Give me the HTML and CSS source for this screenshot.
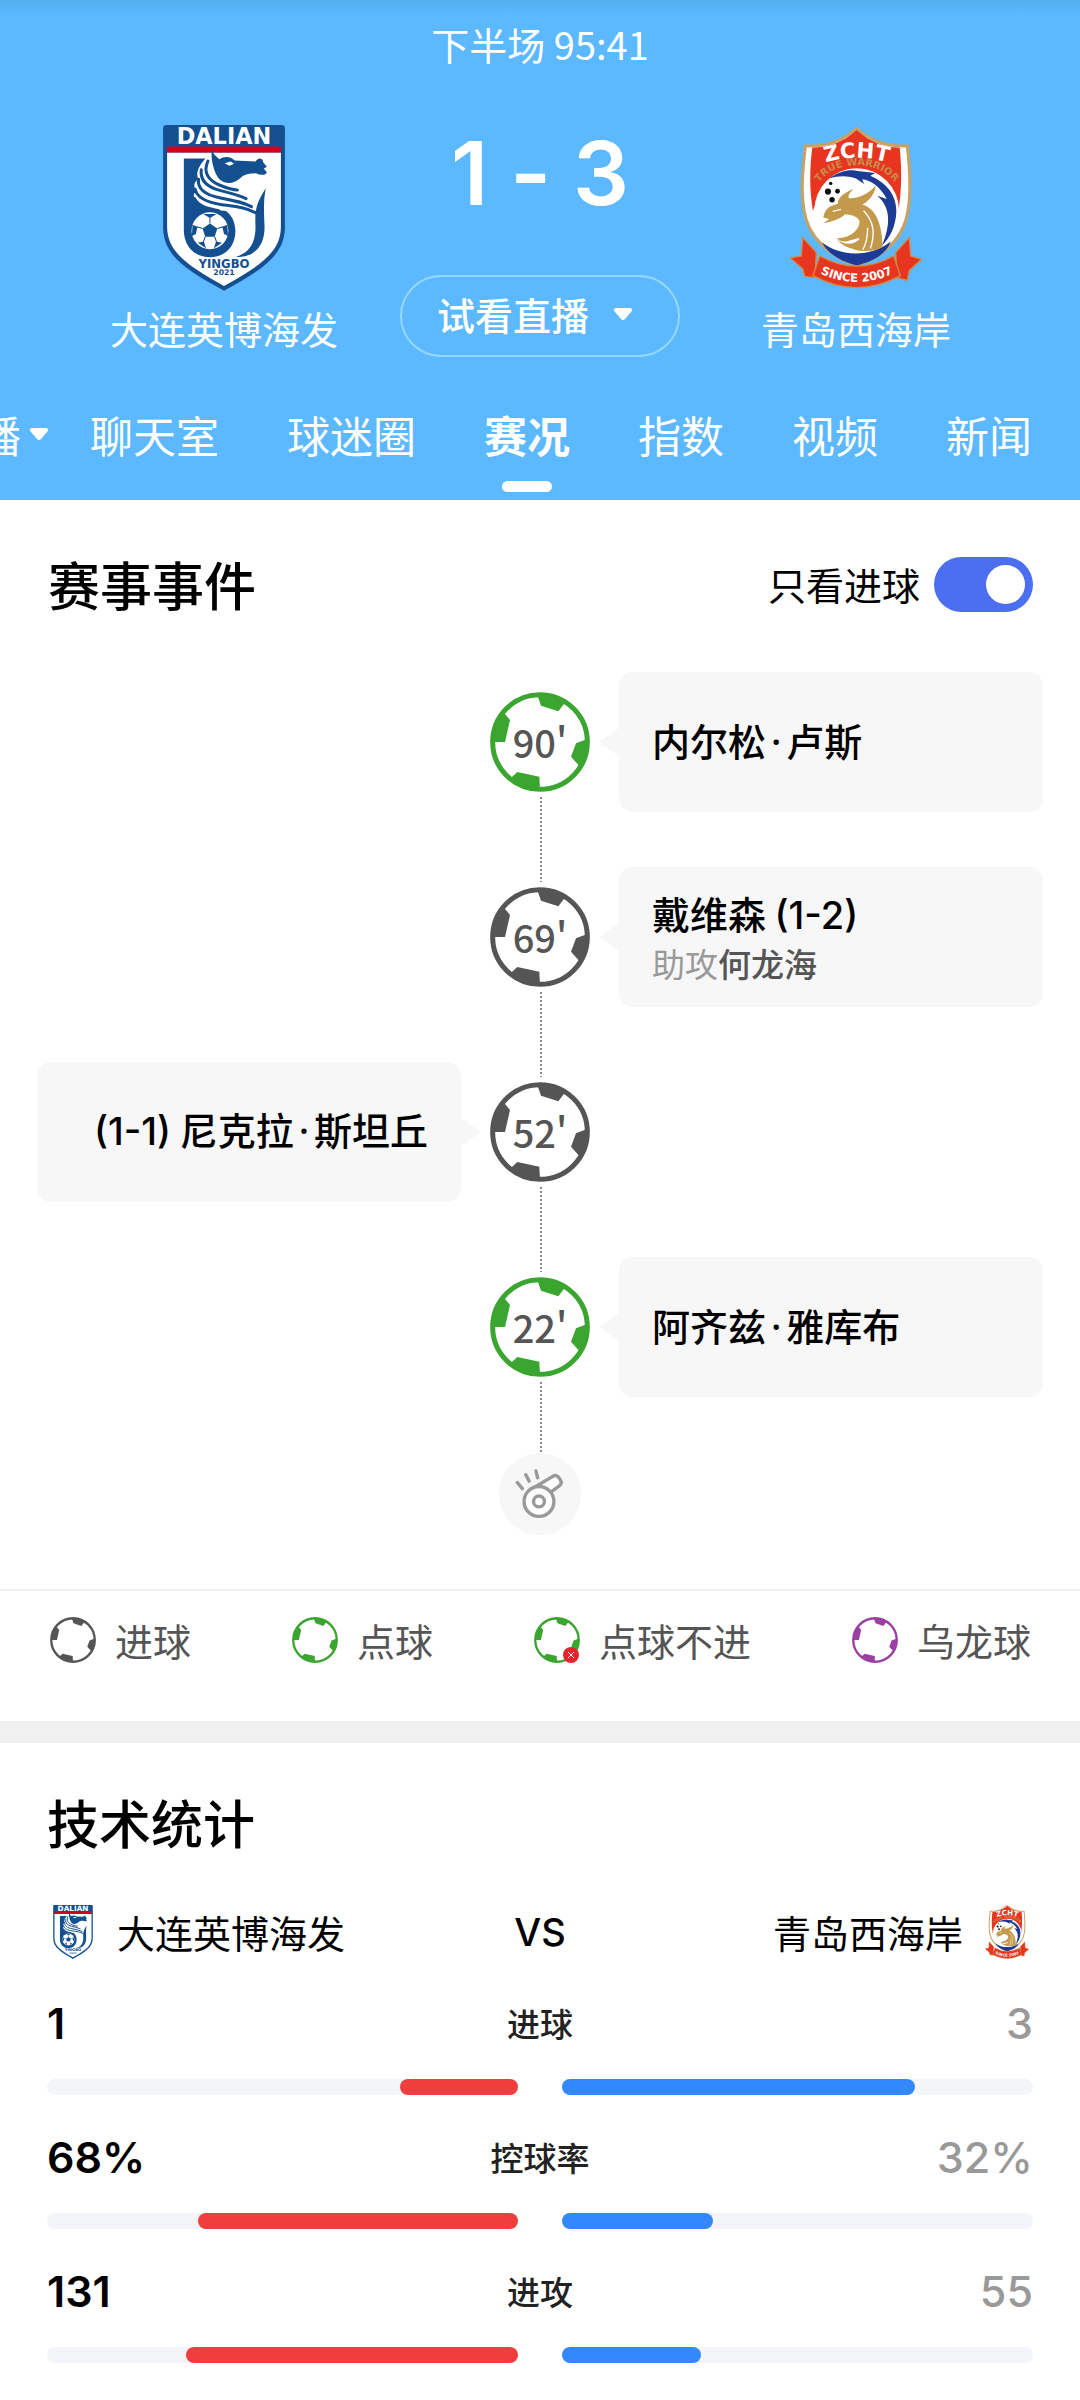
FILE: index.html
```html
<!DOCTYPE html>
<html lang="zh-CN">
<head>
<meta charset="utf-8">
<meta name="viewport" content="width=device-width, initial-scale=1">
<title>大连英博海发 1 - 3 青岛西海岸</title>
<link rel="stylesheet" href="styles.css">
</head>
<body>

<svg class="sprite" aria-hidden="true">
  <symbol id="ball" viewBox="60 64 300 300">
    <circle class="ball-ring" cx="210" cy="214" r="142"/>
    <path d="M203 76 L213 105 L265 122 L288 92 Q250 68 203 70Z M352 205 L318 218 L303 258 L330 288 Q358 250 355 205Z M120 324 L142 304 L208 318 L210 358 Q155 358 120 324Z M66 214 L105 214 L120 148 L102 126 Q66 165 66 214Z"/>
  </symbol>

  <symbol id="dalian" viewBox="38 46 368 496">
    <path fill="#14508f" d="M50 46H394Q404 46 404 56V350C404 436 336 478 222 541C106 478 40 436 40 350V56Q40 46 50 46Z"/>
    <path fill="#fff" d="M52 128H392V350C392 428 326 468 222 527C118 468 52 428 52 350Z"/>
    <path fill="#d0021f" d="M52 110H392V128H52Z"/>
    <text class="crest-text" x="222" y="103" font-size="67" fill="#fff">DALIAN</text>
    <path fill="#14508f" d="M102 146H178L166 180L150 285L222 300C275 325 270 441 180 441C130 441 102 405 102 360Z"/>
    <path fill="#fff" d="M172 140C148 165 135 190 146 208C132 215 128 232 142 244C128 250 128 262 142 272C150 290 175 290 200 300C240 306 280 300 322 316C330 280 345 240 350 200L280 170L200 150Z"/>
    <path fill="#14508f" d="M185 118C190 134 198 140 208 148C226 136 246 142 254 152L316 155C324 142 338 143 339 157L350 171L341 176L350 188C346 198 330 196 318 190C296 192 286 190 270 205C252 222 226 226 206 206C190 182 183 150 185 118Z"/>
    <path fill="#fff" d="M224 160L242 155L252 162L238 168Z"/>
    <g fill="none" stroke="#14508f" stroke-width="9" stroke-linecap="round">
      <path d="M174 154C158 188 176 212 210 226S254 240 262 240"/>
      <path d="M154 180C150 214 172 232 212 242S272 258 288 266"/>
      <path d="M146 208C142 238 170 256 212 264S278 276 304 290"/>
      <path d="M136 238C142 266 174 278 216 284S284 292 316 308"/>
      <path d="M134 266C146 290 174 296 206 302"/>
    </g>
    <path fill="#14508f" d="M347 235C318 280 314 300 316 345C318 402 294 430 256 440C306 444 346 412 343 345C341 300 340 268 347 235Z"/>
    <circle cx="180" cy="362" r="55" fill="#fff"/>
    <g fill="#14508f">
      <path d="M180 340L202 355L194 380H166L158 355Z"/>
      <path d="M160 312H200L180 324Z M128 344L143 350L138 372L126 378Z M232 344L217 350L222 372L234 378Z M144 398L162 394L168 414Z M216 398L198 394L192 414Z"/>
    </g>
    <path fill="none" stroke="#14508f" stroke-width="3" d="M180 340V322M202 355L219 350M194 380L200 396M166 380L160 396M158 355L141 350"/>
    <text class="crest-text" x="222" y="473" font-size="35" fill="#14508f">YINGBO</text>
    <text class="crest-text" x="222" y="495" font-size="23" fill="#14508f">2021</text>
  </symbol>

  <symbol id="qingdao" viewBox="35 25 386 474">
    <g fill="#e8351f" stroke="#d08a45" stroke-width="4">
      <path d="M72 348L112 392L108 466L78 462L72 440L36 408L68 402Z"/>
      <path d="M384 348L344 392L348 466L378 474L384 444L420 412L388 402Z"/>
    </g>
    <path fill="#fff" stroke="#c9a263" stroke-width="9" stroke-linejoin="round" d="M230 30C185 68 135 84 80 80C72 150 66 210 76 270C88 345 145 400 230 430C315 400 368 345 380 270C390 210 386 150 378 80C325 84 275 68 230 30Z"/>
    <path fill="#e8351f" d="M230 34C190 70 150 84 100 86C92 150 92 210 102 270L130 200L230 148L320 190L352 270C362 210 362 150 356 86C310 84 270 70 230 34Z"/>
    <circle cx="230" cy="270" r="124" fill="#fff"/>
    <path fill="#1d3a94" d="M128 362C180 404 270 408 330 360C316 396 280 418 230 430C182 418 146 396 128 362Z"/>
    <path fill="#1d3a94" d="M150 176C180 152 215 148 232 154L284 160L270 168C320 190 345 225 346 270C345 320 325 350 304 372C330 310 330 260 290 226L318 236C300 200 270 180 246 178L252 192L228 176C200 166 175 168 150 176Z"/>
    <path fill="#c39a4c" d="M132 290C138 262 150 256 174 250C178 226 196 218 220 206C206 222 204 228 208 234C240 232 262 222 286 196C282 226 262 244 246 252C282 262 304 300 306 376C286 390 250 390 222 384C240 370 244 362 236 350C204 358 190 368 172 350C196 352 240 334 238 300C232 284 210 282 196 280C184 292 160 302 134 306L150 294Z"/>
    <path fill="#c39a4c" d="M170 350C190 372 220 372 240 352L258 384C220 388 188 376 170 350Z"/>
    <path fill="none" stroke="#fff" stroke-width="4" d="M250 270C280 300 284 340 270 380M262 320C262 350 256 370 248 384M160 272L184 266"/>
    <g fill="#111"><circle cx="146" cy="214" r="9"/><circle cx="174" cy="213" r="7"/><circle cx="158" cy="238" r="8"/><circle cx="154" cy="190" r="5"/></g>
    <path id="zcht-arc" fill="none" d="M112 138Q230 92 348 138"/>
    <text class="crest-text" font-size="62" fill="#fff"><textPath href="#zcht-arc" startOffset="50%">ZCHT</textPath></text>
    <path id="warrior-arc" fill="none" d="M108 212C140 112 320 112 354 212"/>
    <text class="crest-text" font-size="29" fill="#c98a4a"><textPath href="#warrior-arc" startOffset="50%">TRUE WARRIOR</textPath></text>
    <path fill="#e8351f" stroke="#d08a45" stroke-width="4" d="M122 402Q230 462 338 402L358 460Q230 530 102 460Z"/>
    <path id="since-arc" fill="none" d="M112 448Q230 508 348 448"/>
    <text class="crest-text" font-size="34" fill="#fff"><textPath href="#since-arc" startOffset="50%">SINCE 2007</textPath></text>
  </symbol>
</svg>

<header class="hero">
  <p class="clock">下半场 95:41</p>
  <div class="matchup">
    <div class="team">
      <svg class="crest" role="img" aria-label="大连英博海发"><use href="#dalian"/></svg>
      <span class="team-name">大连英博海发</span>
    </div>
    <div class="center">
      <div class="score"><span>1</span><span>-</span><span>3</span></div>
      <button class="watch" type="button">试看直播
        <svg class="caret" viewBox="0 0 20 12" aria-hidden="true"><path d="M3 0H17Q21 1 18 4L12 11Q10 13 8 11L2 4Q-1 1 3 0Z"/></svg>
      </button>
    </div>
    <div class="team">
      <svg class="crest" role="img" aria-label="青岛西海岸"><use href="#qingdao"/></svg>
      <span class="team-name">青岛西海岸</span>
    </div>
  </div>
  <nav class="tabs">
    <a class="tab tab-menu" href="#live">直播<svg class="caret" viewBox="0 0 20 12" aria-hidden="true"><path d="M3 0H17Q21 1 18 4L12 11Q10 13 8 11L2 4Q-1 1 3 0Z"/></svg></a>
    <a class="tab" href="#chat">聊天室</a>
    <a class="tab" href="#fans">球迷圈</a>
    <a class="tab active" href="#events" aria-current="page">赛况</a>
    <a class="tab" href="#odds">指数</a>
    <a class="tab" href="#video">视频</a>
    <a class="tab" href="#news">新闻</a>
  </nav>
</header>

<main>
  <section class="events" id="events">
    <div class="section-head">
      <h2>赛事事件</h2>
      <label class="filter">只看进球<input class="switch" type="checkbox" checked></label>
    </div>

    <ol class="timeline">
      <li class="event away">
        <div class="minute penalty"><svg class="ball"><use href="#ball"/></svg><span>90'</span></div>
        <div class="card"><p class="player">内尔松<span class="dot">·</span>卢斯</p></div>
      </li>
      <li class="event away">
        <div class="minute goal"><svg class="ball"><use href="#ball"/></svg><span>69'</span></div>
        <div class="card"><p class="player">戴维森 <span class="tally">(1-2)</span></p><p class="assist">助攻<b>何龙海</b></p></div>
      </li>
      <li class="event home">
        <div class="minute goal"><svg class="ball"><use href="#ball"/></svg><span>52'</span></div>
        <div class="card"><p class="player"><span class="tally">(1-1)</span> 尼克拉<span class="dot">·</span>斯坦丘</p></div>
      </li>
      <li class="event away last">
        <div class="minute penalty"><svg class="ball"><use href="#ball"/></svg><span>22'</span></div>
        <div class="card"><p class="player">阿齐兹<span class="dot">·</span>雅库布</p></div>
      </li>
    </ol>

    <svg class="whistle" viewBox="149 581 242 242" role="img" aria-label="开场">
      <circle cx="270" cy="702" r="121" fill="#f7f7f7"/>
      <g fill="#fff" stroke="#999" stroke-width="10" stroke-linecap="round" stroke-linejoin="round">
        <path d="M240 690L308 650Q318 644 325 653L331 662Q336 670 328 677L305 694"/>
        <circle cx="267" cy="724" r="44"/>
        <circle cx="267" cy="724" r="16"/>
        <path d="M203 668L218 686M228 645L238 664M258 634L263 654"/>
      </g>
    </svg>

    <ul class="legend">
      <li class="goal"><svg class="ball"><use href="#ball"/></svg>进球</li>
      <li class="penalty"><svg class="ball"><use href="#ball"/></svg>点球</li>
      <li class="penalty missed"><svg class="ball"><use href="#ball"/></svg><svg class="miss" viewBox="0 0 16 16" aria-hidden="true"><circle cx="8" cy="8" r="8"/><path d="M5 5L11 11M11 5L5 11"/></svg>点球不进</li>
      <li class="own-goal"><svg class="ball"><use href="#ball"/></svg>乌龙球</li>
    </ul>
  </section>

  <section class="stats">
    <h2>技术统计</h2>
    <div class="versus">
      <div class="side"><svg class="mini-crest" aria-hidden="true"><use href="#dalian"/></svg>大连英博海发</div>
      <span class="vs">VS</span>
      <div class="side right">青岛西海岸<svg class="mini-crest" aria-hidden="true"><use href="#qingdao"/></svg></div>
    </div>

    <ul class="stat-list">
      <li class="stat">
        <div class="figures"><span class="value">1</span><span class="label">进球</span><span class="value lower">3</span></div>
        <div class="bars"><div class="track left"><div class="fill red" style="width:25%"></div></div><div class="track"><div class="fill blue" style="width:75%"></div></div></div>
      </li>
      <li class="stat">
        <div class="figures"><span class="value">68%</span><span class="label">控球率</span><span class="value lower">32%</span></div>
        <div class="bars"><div class="track left"><div class="fill red" style="width:68%"></div></div><div class="track"><div class="fill blue" style="width:32%"></div></div></div>
      </li>
      <li class="stat">
        <div class="figures"><span class="value">131</span><span class="label">进攻</span><span class="value lower">55</span></div>
        <div class="bars"><div class="track left"><div class="fill red" style="width:70.4%"></div></div><div class="track"><div class="fill blue" style="width:29.6%"></div></div></div>
      </li>
    </ul>
  </section>
</main>
</body>
</html>
```
FILE: styles.css
```css
* { box-sizing: border-box; }

body {
  margin: 0;
  background: #fff;
  color: #000;
  font-family: "Noto Sans CJK SC", "Noto Sans", sans-serif;
  font-size: 38px;
  line-height: 54px;
}

h2, p, ul, ol { margin: 0; padding: 0; list-style: none; }
h2 { font-size: 52px; line-height: 60px; font-weight: 500; }

.sprite { display: none; }
.crest-text { font-family: "DejaVu Sans", sans-serif; font-weight: 700; text-anchor: middle; }

/* Header */
.hero {
  padding-top: 17px;
  background: linear-gradient(#54aeef, #5cb9ff 14px);
  color: #fff;
}
.clock { text-align: center; }
.matchup {
  display: grid;
  grid-template-columns: 1fr 280px 1fr;
  min-height: 286px;
  padding: 54px 48px 0;
}
.team { display: flex; flex-direction: column; align-items: center; gap: 10px; }
.crest { width: 132px; height: 166px; }
.center { display: flex; flex-direction: column; justify-content: space-between; }
.score {
  display: flex;
  justify-content: center;
  gap: 22px;
  font-family: Inter, sans-serif;
  font-size: 88px;
  line-height: 96px;
  font-weight: 600;
}
.watch {
  display: flex;
  align-items: center;
  justify-content: center;
  gap: 24px;
  height: 82px;
  padding: 0 10px 4px 0;
  border: 2px solid #94d8ff;
  border-radius: 41px;
  background: none;
  color: inherit;
  font: inherit;
  font-weight: 500;
}
.caret { width: 20px; height: 12px; fill: #fff; }

.tabs {
  display: flex;
  justify-content: flex-end;
  gap: 68px;
  margin-top: 47px;
  padding-right: 48px;
  overflow: hidden;
  font-size: 43px;
  line-height: 60px;
}
.tab {
  position: relative;
  flex: none;
  padding-bottom: 36px;
  color: inherit;
  text-decoration: none;
}
.tab-menu { display: flex; align-items: center; gap: 8px; margin-right: -27px; }
.active { font-weight: 700; }
.active::after {
  content: "";
  position: absolute;
  bottom: 8px;
  left: 50%;
  width: 50px;
  height: 11px;
  margin-left: -25px;
  border-radius: 6px;
  background: #fff;
}

/* Events */
.section-head {
  display: flex;
  align-items: center;
  justify-content: space-between;
  padding: 54px 47px 58px 48px;
}
.filter { display: flex; align-items: center; gap: 14px; }
.switch {
  appearance: none;
  width: 99px;
  height: 55px;
  margin: 0;
  padding: 8px;
  border-radius: 28px;
  background: #ccc;
}
.switch::before {
  content: "";
  display: block;
  width: 39px;
  height: 39px;
  border-radius: 50%;
  background: #fff;
}
.switch:checked { background: #4c6ef0; }
.switch:checked::before { margin-left: auto; }

.goal { --ball: #555; }
.penalty { --ball: #3aa52f; }
.own-goal { --ball: #9c3fa3; }
.ball { fill: var(--ball); }
.ball-ring { fill: none; stroke: var(--ball); stroke-width: 15; }

.timeline { display: grid; gap: 55px; padding: 0 37px; }
.event {
  display: grid;
  grid-template-columns: 1fr 158px 1fr;
  align-items: center;
  min-height: 140px;
}
.minute {
  position: relative;
  grid-column: 2;
  grid-row: 1;
  justify-self: center;
  display: grid;
  place-items: center;
  width: 100px;
  height: 100px;
  color: #555;
  font-weight: 500;
}
.minute > * { grid-area: 1 / 1; }
.minute .ball { width: 100px; height: 100px; }
.minute::after {
  content: "";
  position: absolute;
  top: 105px;
  left: 50px;
  width: 2px;
  height: 85px;
  background: repeating-linear-gradient(#888 0 2px, transparent 2px 4px);
}
.last .minute::after { height: 71px; }

.card {
  position: relative;
  grid-column: 3;
  grid-row: 1;
  align-self: stretch;
  display: flex;
  flex-direction: column;
  justify-content: center;
  padding: 0 33px 4px;
  border-radius: 14px;
  background: #f7f7f7;
}
.card::before {
  content: "";
  position: absolute;
  top: 50%;
  left: -20px;
  margin-top: -14px;
  border: solid transparent;
  border-width: 14px 20px 14px 0;
  border-right-color: #f7f7f7;
}
.home .card { grid-column: 1; text-align: right; }
.home .card::before {
  left: 100%;
  border-width: 14px 0 14px 20px;
  border-left-color: #f7f7f7;
}
.player { font-weight: 500; line-height: 54px; }
.dot { padding: 0 5px; font-family: "Noto Sans", sans-serif; }
.tally { font-family: Inter, sans-serif; }
.assist { color: #999; font-size: 33px; line-height: 42px; }
.assist b { color: #555; font-weight: 500; }

.whistle { display: block; width: 82px; height: 82px; margin: 56px auto 54px; }

.legend {
  display: flex;
  justify-content: space-between;
  padding: 26px 49px 58px 50px;
  border-top: 2px solid #f0f0f0;
  color: #555;
  line-height: 44px;
}
.legend li { position: relative; display: flex; align-items: center; gap: 19px; }
.legend .ball { width: 46px; height: 46px; }
.miss {
  position: absolute;
  left: 29px;
  bottom: 0;
  width: 16px;
  height: 16px;
  fill: #e5222e;
  stroke: #fff;
}
.miss circle { stroke: none; }

/* Stats */
.stats { padding: 49px 47px 38px; border-top: 22px solid #f0f0f0; }
.versus {
  display: grid;
  grid-template-columns: 1fr auto 1fr;
  align-items: center;
  margin-top: 53px;
}
.side { display: flex; align-items: center; gap: 21px; padding: 0 3px; }
.right { justify-content: flex-end; }
.mini-crest { width: 46px; height: 54px; }
.vs { font-family: Inter, sans-serif; font-weight: 500; }

.stat-list { display: grid; gap: 35px; margin-top: 37px; }
.figures {
  display: grid;
  grid-template-columns: 1fr auto 1fr;
  align-items: center;
}
.value { font-family: Inter, sans-serif; font-size: 43px; font-weight: 600; }
.lower { color: #999; font-weight: 500; text-align: right; }
.label { color: #222; font-size: 33px; font-weight: 500; }
.bars { display: grid; grid-template-columns: 1fr 1fr; gap: 44px; margin-top: 29px; }
.track { display: flex; height: 16px; border-radius: 8px; background: #f4f5f9; }
.left { justify-content: flex-end; }
.fill { border-radius: 8px; }
.red { background: #f03e3f; }
.blue { background: #3388ff; }
```
